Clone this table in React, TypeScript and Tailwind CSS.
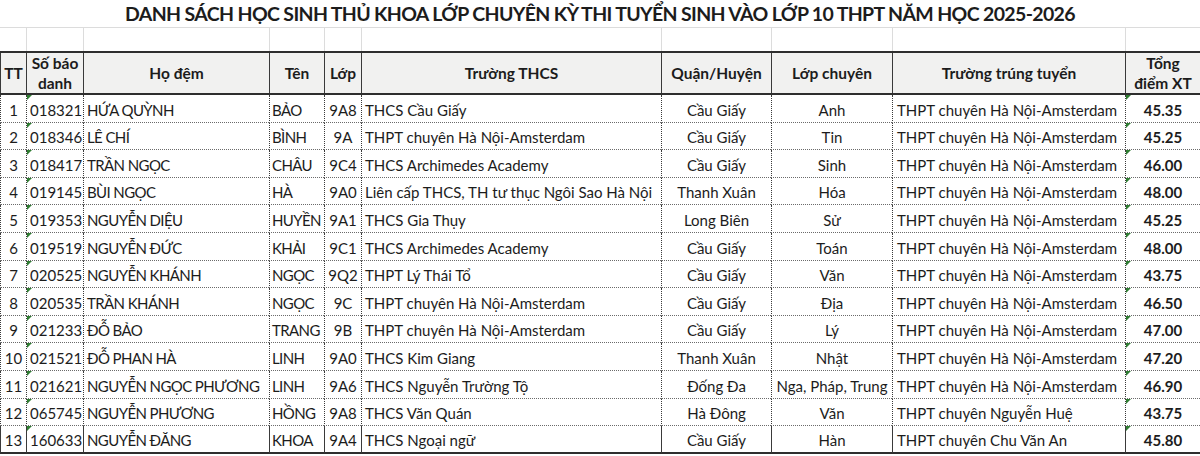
type Row = {
  tt: number;
  sbd: string;
  hoDem: string;
  ten: string;
  lop: string;
  thcs: string;
  quan: string;
  chuyen: string;
  truong: string;
  diem: string;
};

const rows: Row[] = [
  { tt: 1, sbd: "018321", hoDem: "HỨA QUỲNH", ten: "BẢO", lop: "9A8", thcs: "THCS Cầu Giấy", quan: "Cầu Giấy", chuyen: "Anh", truong: "THPT chuyên Hà Nội-Amsterdam", diem: "45.35" },
  { tt: 2, sbd: "018346", hoDem: "LÊ CHÍ", ten: "BÌNH", lop: "9A", thcs: "THPT chuyên Hà Nội-Amsterdam", quan: "Cầu Giấy", chuyen: "Tin", truong: "THPT chuyên Hà Nội-Amsterdam", diem: "45.25" },
  { tt: 3, sbd: "018417", hoDem: "TRẦN NGỌC", ten: "CHÂU", lop: "9C4", thcs: "THCS Archimedes Academy", quan: "Cầu Giấy", chuyen: "Sinh", truong: "THPT chuyên Hà Nội-Amsterdam", diem: "46.00" },
  { tt: 4, sbd: "019145", hoDem: "BÙI NGỌC", ten: "HÀ", lop: "9A0", thcs: "Liên cấp THCS, TH tư thục Ngôi Sao Hà Nội", quan: "Thanh Xuân", chuyen: "Hóa", truong: "THPT chuyên Hà Nội-Amsterdam", diem: "48.00" },
  { tt: 5, sbd: "019353", hoDem: "NGUYỄN DIỆU", ten: "HUYỀN", lop: "9A1", thcs: "THCS Gia Thụy", quan: "Long Biên", chuyen: "Sử", truong: "THPT chuyên Hà Nội-Amsterdam", diem: "45.25" },
  { tt: 6, sbd: "019519", hoDem: "NGUYỄN ĐỨC", ten: "KHẢI", lop: "9C1", thcs: "THCS Archimedes Academy", quan: "Cầu Giấy", chuyen: "Toán", truong: "THPT chuyên Hà Nội-Amsterdam", diem: "48.00" },
  { tt: 7, sbd: "020525", hoDem: "NGUYỄN KHÁNH", ten: "NGỌC", lop: "9Q2", thcs: "THPT Lý Thái Tổ", quan: "Cầu Giấy", chuyen: "Văn", truong: "THPT chuyên Hà Nội-Amsterdam", diem: "43.75" },
  { tt: 8, sbd: "020535", hoDem: "TRẦN KHÁNH", ten: "NGỌC", lop: "9C", thcs: "THPT chuyên Hà Nội-Amsterdam", quan: "Cầu Giấy", chuyen: "Địa", truong: "THPT chuyên Hà Nội-Amsterdam", diem: "46.50" },
  { tt: 9, sbd: "021233", hoDem: "ĐỖ BẢO", ten: "TRANG", lop: "9B", thcs: "THPT chuyên Hà Nội-Amsterdam", quan: "Cầu Giấy", chuyen: "Lý", truong: "THPT chuyên Hà Nội-Amsterdam", diem: "47.00" },
  { tt: 10, sbd: "021521", hoDem: "ĐỖ PHAN HÀ", ten: "LINH", lop: "9A0", thcs: "THCS Kim Giang", quan: "Thanh Xuân", chuyen: "Nhật", truong: "THPT chuyên Hà Nội-Amsterdam", diem: "47.20" },
  { tt: 11, sbd: "021621", hoDem: "NGUYỄN NGỌC PHƯƠNG", ten: "LINH", lop: "9A6", thcs: "THCS Nguyễn Trường Tộ", quan: "Đống Đa", chuyen: "Nga, Pháp, Trung", truong: "THPT chuyên Hà Nội-Amsterdam", diem: "46.90" },
  { tt: 12, sbd: "065745", hoDem: "NGUYỄN PHƯƠNG", ten: "HỒNG", lop: "9A8", thcs: "THCS Văn Quán", quan: "Hà Đông", chuyen: "Văn", truong: "THPT chuyên Nguyễn Huệ", diem: "43.75" },
  { tt: 13, sbd: "160633", hoDem: "NGUYỄN ĐĂNG", ten: "KHOA", lop: "9A4", thcs: "THCS Ngoại ngữ", quan: "Cầu Giấy", chuyen: "Hàn", truong: "THPT chuyên Chu Văn An", diem: "45.80" },
];

// column widths measured off the sheet
const cols = "grid grid-cols-[26px_57px_186px_55px_37px_300px_110px_121px_233px_75px]";

// excel's little green "number stored as text" corner
const Flag = () => (
  <span className="absolute top-0 left-0 w-0 h-0 border-t-[5px] border-t-[#2f7d32] border-r-[5px] border-r-transparent" />
);

const headCell = "border-l border-[#3a3a3a] flex items-center justify-center text-center";

const App = () => {
  return (
    <div className="w-[1200px] h-[456px] overflow-hidden bg-white text-[#1c1c1c] font-['Lato',sans-serif]">
      <div className="h-[28px] border-b border-[#dcdcdc] flex items-center justify-center font-bold text-[19.5px] tracking-[-0.65px]">
        DANH SÁCH HỌC SINH THỦ KHOA LỚP CHUYÊN KỲ THI TUYỂN SINH VÀO LỚP 10 THPT NĂM HỌC 2025-2026
      </div>
      <div className={`${cols} h-[23px]`}>
        {Array.from({ length: 10 }).map((_, i) => (
          <div key={i} className={i === 0 ? "" : "border-l border-[#dcdcdc]"} />
        ))}
      </div>
      <div className={`${cols} h-[44px] bg-[#f1f1f0] border-t-2 border-b-2 border-[#2e2e2e] font-bold text-[15.5px] leading-[20px]`}>
        <div className={headCell}>TT</div>
        <div className={headCell}>
          Số báo
          <br />
          danh
        </div>
        <div className={headCell}>Họ đệm</div>
        <div className={headCell}>Tên</div>
        <div className={headCell}>Lớp</div>
        <div className={headCell}>Trường THCS</div>
        <div className={headCell}>Quận/Huyện</div>
        <div className={headCell}>Lớp chuyên</div>
        <div className={headCell}>Trường trúng tuyển</div>
        <div className={headCell}>
          Tổng
          <br />
          điểm XT
        </div>
      </div>
      <div className="text-[15px] leading-[18px]">
        {rows.map((r, i) => {
          const last = i === rows.length - 1;
          const line = last ? "border-b-2 border-b-[#2e2e2e] border-solid" : "border-b border-dotted border-b-[#6a6a6a]";
          const base = `relative flex items-end pb-[3px] whitespace-nowrap border-l border-l-[#3a3a3a] ${line}`;
          return (
            <div key={r.tt} className={`${cols} h-[27.6px]`}>
              <div className={`${base} justify-center`}>{r.tt}</div>
              <div className={`${base} pl-[3px]`}>
                <Flag />
                {r.sbd}
              </div>
              <div className={`${base} pl-[3px] tracking-[-0.6px]`}>{r.hoDem}</div>
              <div className={`${base} pl-[2px] tracking-[-0.6px]`}>{r.ten}</div>
              <div className={`${base} justify-center`}>{r.lop}</div>
              <div className={`${base} pl-[3px]`}>{r.thcs}</div>
              <div className={`${base} justify-center`}>{r.quan}</div>
              <div className={`${base} justify-center`}>{r.chuyen}</div>
              <div className={`${base} pl-[4px]`}>{r.truong}</div>
              <div className={`${base} justify-center font-bold`}>
                <Flag />
                {r.diem}
              </div>
            </div>
          );
        })}
      </div>
    </div>
  );
};

export default App;
